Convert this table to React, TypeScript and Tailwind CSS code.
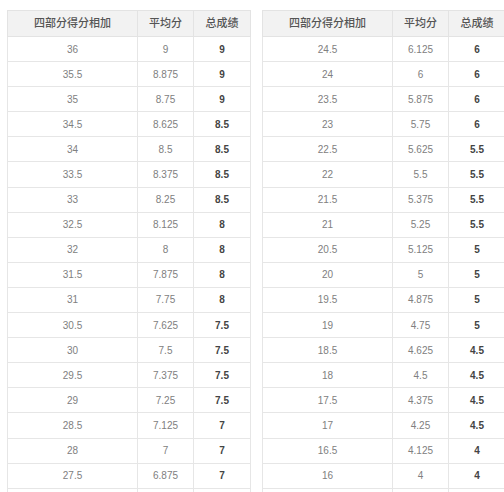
import React from "react";

type Row = { sum: number; total: number };

const leftRows: Row[] = [
  { sum: 36, total: 9 },
  { sum: 35.5, total: 9 },
  { sum: 35, total: 9 },
  { sum: 34.5, total: 8.5 },
  { sum: 34, total: 8.5 },
  { sum: 33.5, total: 8.5 },
  { sum: 33, total: 8.5 },
  { sum: 32.5, total: 8 },
  { sum: 32, total: 8 },
  { sum: 31.5, total: 8 },
  { sum: 31, total: 8 },
  { sum: 30.5, total: 7.5 },
  { sum: 30, total: 7.5 },
  { sum: 29.5, total: 7.5 },
  { sum: 29, total: 7.5 },
  { sum: 28.5, total: 7 },
  { sum: 28, total: 7 },
  { sum: 27.5, total: 7 },
];

const rightRows: Row[] = [
  { sum: 24.5, total: 6 },
  { sum: 24, total: 6 },
  { sum: 23.5, total: 6 },
  { sum: 23, total: 6 },
  { sum: 22.5, total: 5.5 },
  { sum: 22, total: 5.5 },
  { sum: 21.5, total: 5.5 },
  { sum: 21, total: 5.5 },
  { sum: 20.5, total: 5 },
  { sum: 20, total: 5 },
  { sum: 19.5, total: 5 },
  { sum: 19, total: 5 },
  { sum: 18.5, total: 4.5 },
  { sum: 18, total: 4.5 },
  { sum: 17.5, total: 4.5 },
  { sum: 17, total: 4.5 },
  { sum: 16.5, total: 4 },
  { sum: 16, total: 4 },
];

function ScoreTable({ rows }: { rows: Row[] }) {
  return (
    <table className="w-[243px] shrink-0 border-collapse table-fixed text-center">
      <colgroup>
        <col className="w-[130px]" />
        <col className="w-[56px]" />
        <col className="w-[57px]" />
      </colgroup>
      <thead>
        <tr className="h-[26px] bg-[#f2f2f2] text-[11px] text-[#555]">
          <th className="border border-[#e3e3e3] font-medium">四部分得分相加</th>
          <th className="border border-[#e3e3e3] font-medium">平均分</th>
          <th className="border border-[#e3e3e3] font-medium">总成绩</th>
        </tr>
      </thead>
      <tbody className="text-[10px] text-[#808080]">
        {rows.map((row, index) => (
          <tr key={index} className="h-[25.1px]">
            <td className="border border-[#e6e6e6]">{row.sum}</td>
            <td className="border border-[#e6e6e6]">{row.sum / 4}</td>
            <td className="border border-[#e6e6e6] font-semibold text-[#444]">{row.total}</td>
          </tr>
        ))}
        {/* next row, cut off by the bottom of the screenshot */}
        <tr className="h-[25px]">
          <td className="border border-[#e6e6e6]" />
          <td className="border border-[#e6e6e6]" />
          <td className="border border-[#e6e6e6]" />
        </tr>
      </tbody>
    </table>
  );
}

export default function App() {
  return (
    <div
      className="h-[492px] w-[504px] overflow-hidden bg-white pl-[7px] pt-[10px]"
      style={{ fontFamily: '"Liberation Sans", "Noto Sans CJK SC", sans-serif' }}
    >
      <div className="flex gap-[11px]">
        <ScoreTable rows={leftRows} />
        <ScoreTable rows={rightRows} />
      </div>
    </div>
  );
}
